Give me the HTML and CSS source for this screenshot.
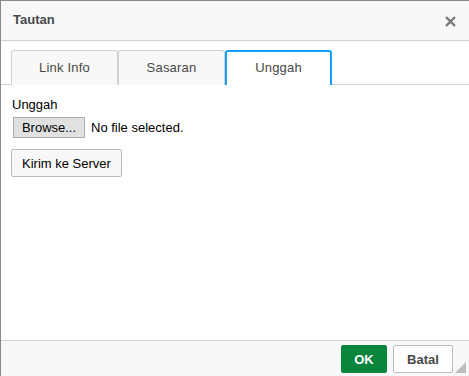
FILE: index.html
```html
<!DOCTYPE html>
<html lang="id">
  <head>
    <meta charset="UTF-8" />
    <meta name="viewport" content="width=device-width, initial-scale=1.0" />
    <title>Tautan</title>
    <link rel="stylesheet" href="styles.css">
  </head>
  <body>
    <div class="dialog">
      <div class="dialog-header">
        <span class="dialog-title">Tautan</span>
        <a class="dialog-close" href="#" title="Tutup">
          <svg width="11" height="11" viewBox="0 0 11 11">
            <path d="M1 1L10 10M10 1L1 10" stroke="#777" stroke-width="2.4" />
          </svg>
        </a>
      </div>

      <div class="tabs">
        <a class="tab" href="#">Link Info</a>
        <a class="tab" href="#">Sasaran</a>
        <a class="tab active" href="#">Unggah</a>
      </div>

      <div class="dialog-body">
        <label for="upload" class="field-label">Unggah</label>
        <div class="file-row">
          <button type="button" class="browse-btn">Browse...</button>
          <span class="file-name">No file selected.</span>
        </div>
        <button type="button" class="btn btn-send">Kirim ke Server</button>
      </div>

      <div class="dialog-footer">
        <button type="button" class="btn btn-ok">OK</button>
        <button type="button" class="btn btn-cancel">Batal</button>
        <span class="resize-grip"></span>
      </div>
    </div>
  </body>
</html>
```

FILE: styles.css
```css
body {
  margin: 0;
  padding: 0;
  overflow: hidden;
  font-family: "Liberation Sans", Arial, sans-serif;
  font-size: 13px;
  color: #484848;
  background: #fff;
}
.dialog {
  display: flex;
  flex-direction: column;
  height: 375px;
  border-top: 1px solid #8a8a8a;
  border-left: 1px solid #8a8a8a;
  position: relative;
}
.dialog-header {
  height: 39px;
  display: flex;
  align-items: center;
  justify-content: space-between;
  padding: 0 12px 0 12px;
  background: #f8f8f8;
  border-bottom: 1px solid #d1d1d1;
}
.dialog-title {
  font-weight: bold;
  color: #484848;
  margin-top: -2px;
}
.dialog-close {
  display: flex;
  margin-right: 1px;
  margin-top: 1px;
}
.tabs {
  display: flex;
  padding: 9px 0 0 10px;
  border-bottom: 1px solid #d1d1d1;
  height: 34px;
}
.tab {
  box-sizing: border-box;
  width: 107px;
  height: 35px;
  display: flex;
  align-items: center;
  justify-content: center;
  padding-bottom: 2px;
  background: #f8f8f8;
  border: 1px solid #d1d1d1;
  border-bottom: none;
  border-radius: 3px 3px 0 0;
  color: #484848;
  text-decoration: none;
  letter-spacing: 0.2px;
}
.tab.active {
  background: #fff;
  border: 2px solid #139ff7;
  border-bottom: none;
}
.dialog-body {
  flex: 1;
  padding: 11px 11px;
  color: #000;
}
.field-label {
  display: block;
  line-height: 15px;
  margin-top: 1px;
  color: #000;
}
.file-row {
  display: flex;
  align-items: center;
  gap: 6px;
  margin-top: 5px;
  margin-left: 1px;
}
.browse-btn {
  font-family: "Liberation Sans", Arial, sans-serif;
  font-size: 13px;
  width: 72px;
  height: 21px;
  padding: 0;
  background: #e1e1e1;
  border: 1px solid #adadad;
  color: #000;
}
.file-name {
  color: #000;
}
.btn {
  box-sizing: border-box;
  font-family: "Liberation Sans", Arial, sans-serif;
  font-size: 13px;
  height: 28px;
  padding: 0 10px;
  background: #f8f8f8;
  border: 1px solid #bcbcbc;
  border-radius: 2px;
  color: #000;
}
.btn-send {
  margin-top: 11px;
  margin-left: -1px;
}
.dialog-footer {
  height: 36px;
  display: flex;
  justify-content: flex-end;
  align-items: flex-start;
  gap: 6px;
  padding: 4px 16px 0 0;
  box-sizing: border-box;
  background: #f8f8f8;
  border-top: 1px solid #d1d1d1;
  position: relative;
}
.dialog-footer .btn {
  font-weight: bold;
}
.btn-ok {
  width: 46px;
  background: #09863e;
  border-color: #09863e;
  color: #fff;
}
.btn-cancel {
  width: 60px;
  background: #fff;
  color: #484848;
}
.resize-grip {
  position: absolute;
  right: 3px;
  bottom: 3px;
  width: 0;
  height: 0;
  border-left: 11px solid transparent;
  border-bottom: 11px solid #bcbcbc;
}
```
